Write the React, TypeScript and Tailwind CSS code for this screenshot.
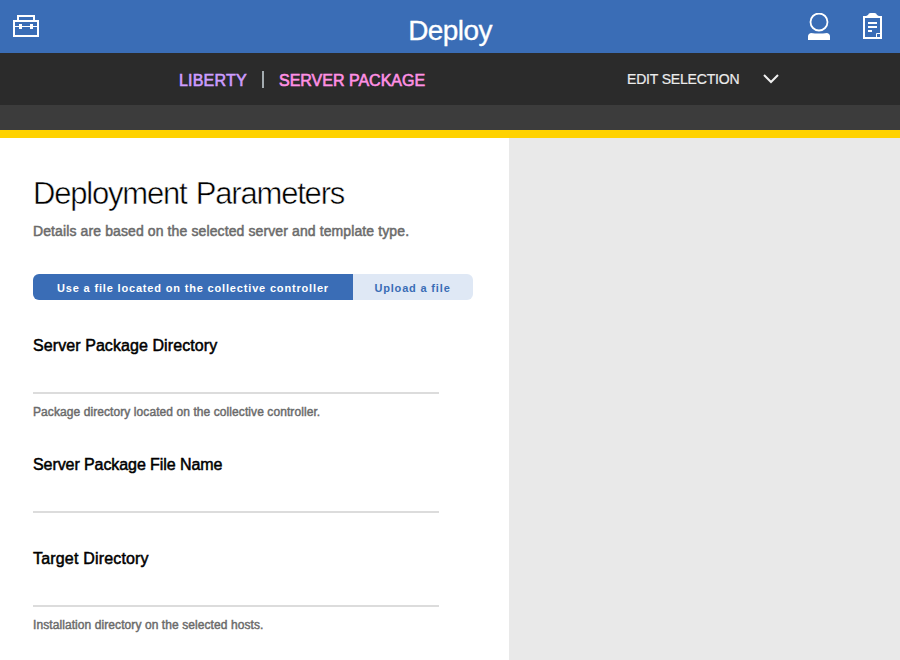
type FieldProps = { label: string; help?: string; className: string; tracking: string };

function Field({ label, help, className, tracking }: FieldProps) {
  return (
    <div className={className}>
      <label
        className={`block h-5 text-[16px] leading-5 text-black [-webkit-text-stroke:0.5px_#000] ${tracking}`}
      >
        {label}
        <input className="mt-[8px] block h-[30px] w-[406px] border-b-2 border-[#dcdcdc] outline-none" />
      </label>
      {help && (
        <p className="mt-[48px] text-[12px] leading-4 tracking-[0.08px] text-[#6b6b6b] [-webkit-text-stroke:0.45px_#6b6b6b]">
          {help}
        </p>
      )}
    </div>
  );
}

function ToolboxIcon() {
  return (
    <svg width="26" height="22" viewBox="0 0 26 22" fill="none" stroke="#fff" strokeWidth="2">
      <path d="M5 6V1h16v5M1 6h24v15H1z" />
      <path d="M2 11.5h22" strokeWidth="1" />
      <path d="M6 9h3v5H6zM17 9h3v5h-3z" fill="#fff" stroke="none" />
    </svg>
  );
}

function UserIcon() {
  return (
    <svg width="22" height="28" viewBox="0 0 22 28">
      <circle cx="11" cy="9" r="8.5" fill="none" stroke="#fff" strokeWidth="1.8" />
      <path d="M0 27v-3.500q0-3 3-3.500q8 1 16 0q3 0.500 3 3.500v3.500z" fill="#fff" />
    </svg>
  );
}

function ClipboardIcon() {
  return (
    <svg width="19" height="26" viewBox="0 0 19 26">
      <path d="M3 4Q3 2.500 5 2Q5.500 0 7.500 0h4q2 0 2.500 2q2 0.500 2 2v1H3z" fill="#fff" />
      <path d="M1 4h17v21H1z" fill="none" stroke="#fff" strokeWidth="2" />
      <path d="M5 10h9M5 14h9M5 18h4" stroke="#fff" strokeWidth="2" />
      <path d="M13.500 24v-3.500H17" fill="none" stroke="#fff" strokeWidth="1" />
    </svg>
  );
}

export default function App() {
  return (
    <div className="flex h-[660px] w-[900px] flex-col overflow-hidden bg-white font-['Liberation_Sans',Arial,sans-serif]">
      <header className="grid h-[53px] shrink-0 grid-cols-3 items-start bg-[#3a6db6] text-white">
        <div className="pt-[15px] pl-[13px]">
          <ToolboxIcon />
        </div>
        <h1 className="pt-[15px] text-center text-[28px] leading-8 tracking-[-0.6px] [-webkit-text-stroke:0.3px_#fff]">
          Deploy
        </h1>
        <div className="flex justify-end gap-[33px] pt-[13px] pr-[18px]">
          <UserIcon />
          <ClipboardIcon />
        </div>
      </header>
      <nav className="flex h-[52px] shrink-0 items-center bg-[#2b2b2b] pl-[179px]">
        <span className="w-[83px] pt-[3px] text-[16px] tracking-[0.2px] text-[#ce9dff] [-webkit-text-stroke:0.6px_#ce9dff]">
          LIBERTY
        </span>
        <span className="h-[17px] w-[2px] bg-[#a4acb0]" />
        <span className="ml-[15px] w-[348px] pt-[3px] text-[16px] tracking-[0px] text-[#ff90e4] [-webkit-text-stroke:0.6px_#ff90e4]">
          SERVER PACKAGE
        </span>
        <button className="flex items-center text-[14px] tracking-[-0.18px] text-[#ececec] [-webkit-text-stroke:0.2px_#ececec]">
          <span className="w-[136px] text-left">EDIT SELECTION</span>
          <svg width="16" height="10" viewBox="0 0 16 10" fill="none" stroke="#f0f0f0" strokeWidth="2">
            <path d="M1 1l7 7 7-7" />
          </svg>
        </button>
      </nav>
      <div className="h-[33px] shrink-0 border-b-8 border-[#ffd200] bg-[#3c3c3c]" />
      <main className="flex min-h-0 grow">
        <section className="w-[509px] shrink-0 pl-[33px]">
          <h2 className="pt-[36px] text-[31px] leading-10 tracking-[-1.2px] [word-spacing:2px] text-black [-webkit-text-stroke:0.5px_#fff]">
            Deployment Parameters
          </h2>
          <p className="mt-[7px] text-[14px] leading-5 tracking-[0.11px] text-[#6b6b6b] [-webkit-text-stroke:0.5px_#6b6b6b]">
            Details are based on the selected server and template type.
          </p>
          <div className="mt-[33px] flex h-[26px] w-[440px] overflow-hidden rounded-[6px] text-[11px] font-bold tracking-[0.83px]">
            <button className="w-[320px] bg-[#3a6db6] pt-[2px] text-white">
              Use a file located on the collective controller
            </button>
            <button className="w-[120px] bg-[#dfe8f5] pt-[2px] pr-px text-[#3a6db6]">Upload a file</button>
          </div>
          <Field
            className="mt-[36px] h-[119px]"
            label="Server Package Directory"
            tracking="tracking-[0.08px]"
            help="Package directory located on the collective controller."
          />
          <Field className="h-[94px]" label="Server Package File Name" tracking="tracking-[-0.08px]" />
          <Field
            className=""
            label="Target Directory"
            tracking="tracking-[0.18px]"
            help="Installation directory on the selected hosts."
          />
        </section>
        <aside className="grow bg-[#e9e9e9]" />
      </main>
    </div>
  );
}
